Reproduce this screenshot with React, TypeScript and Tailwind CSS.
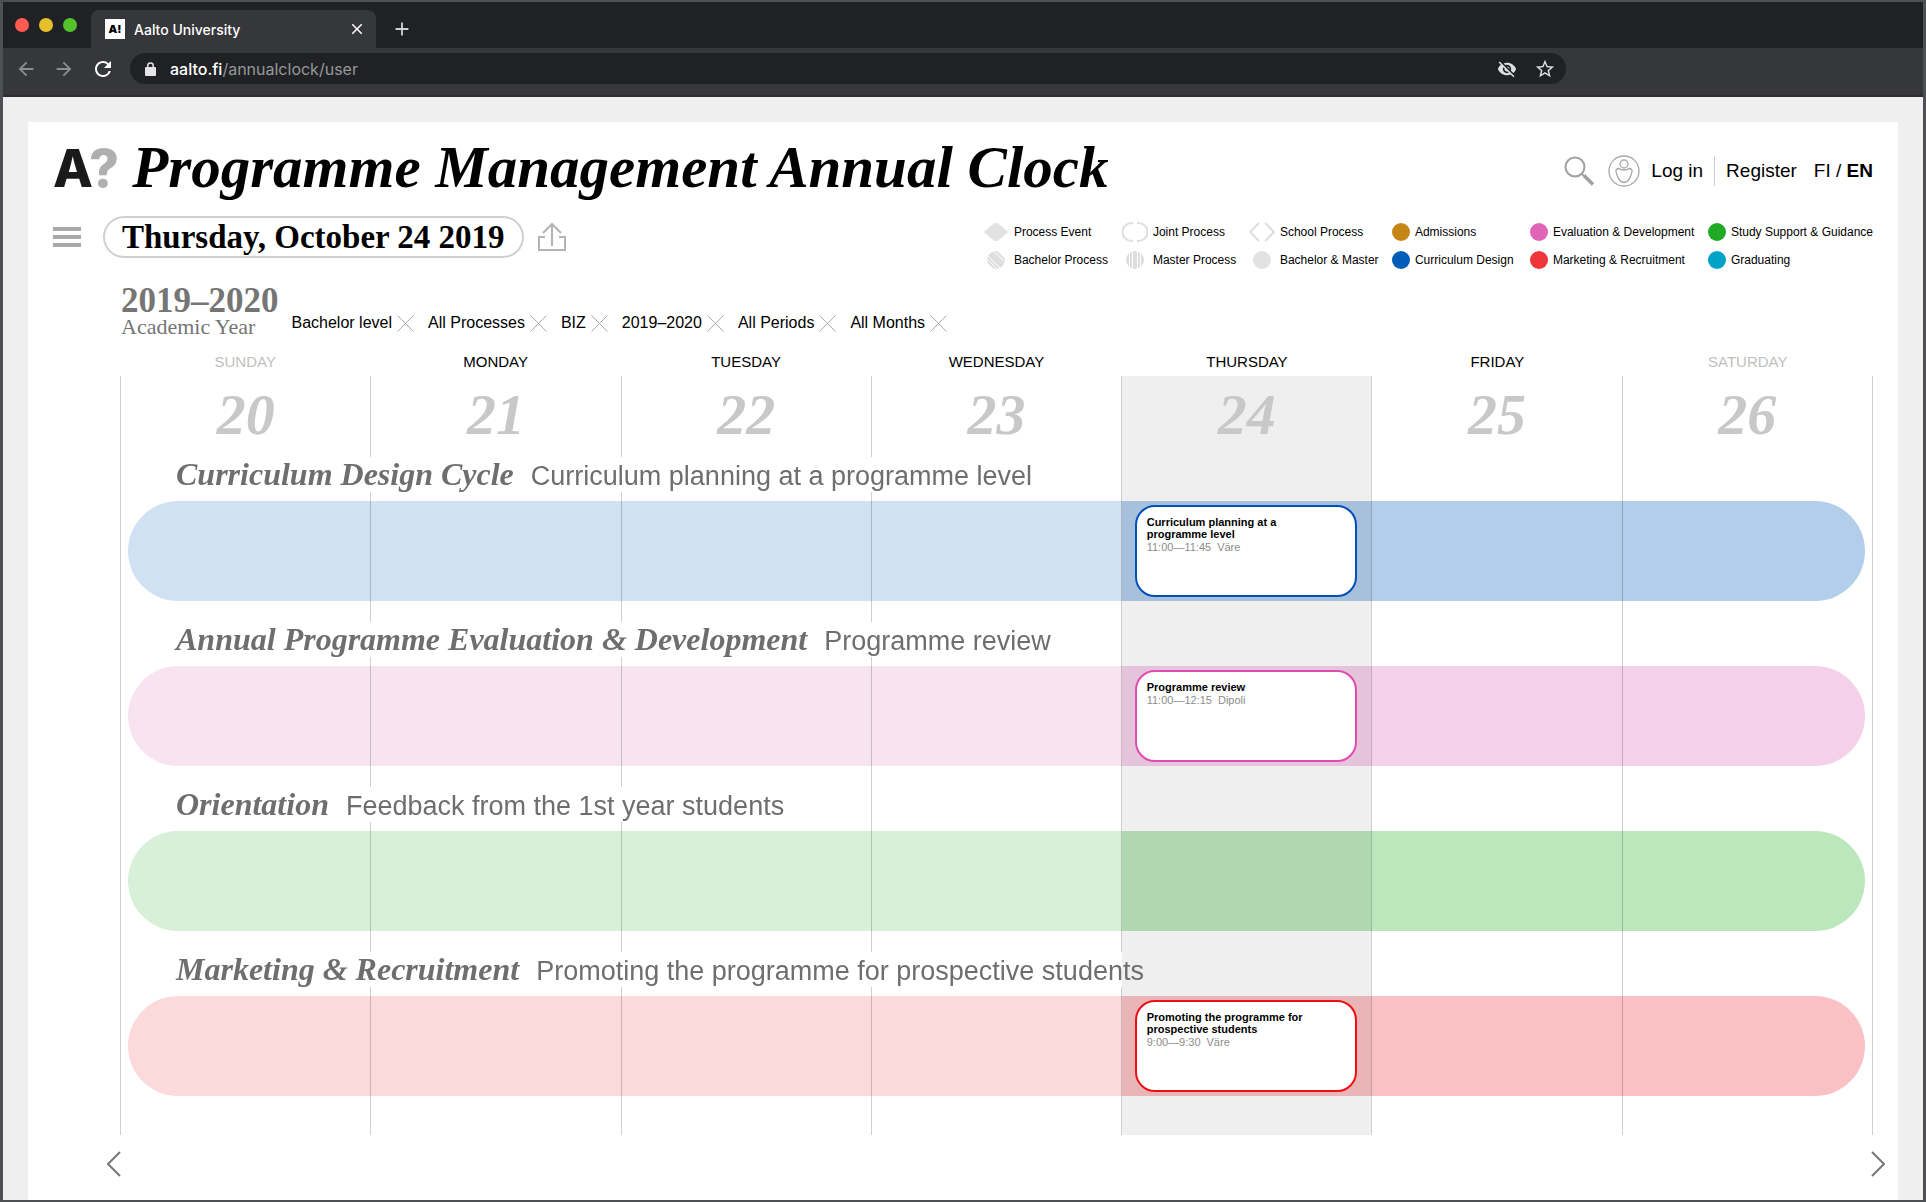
import type { ReactNode } from "react";
import clsx from "clsx";
import { MdArrowBack, MdArrowForward, MdRefresh, MdVisibilityOff, MdStarBorder, MdClose, MdAdd } from "react-icons/md";

const serif = "font-['Liberation_Serif',serif]";

const filters = ["Bachelor level", "All Processes", "BIZ", "2019–2020", "All Periods", "All Months"];

const days = [
  { name: "SUNDAY", date: 20, weekend: true },
  { name: "MONDAY", date: 21 },
  { name: "TUESDAY", date: 22 },
  { name: "WEDNESDAY", date: 23 },
  { name: "THURSDAY", date: 24, today: true },
  { name: "FRIDAY", date: 25 },
  { name: "SATURDAY", date: 26, weekend: true },
];

type Process = {
  title: string;
  subtitle: string;
  past: string;
  upcoming: string;
  border?: string;
  event?: { title: string; time: string; place: string };
};

const processes: Process[] = [
  {
    title: "Curriculum Design Cycle",
    subtitle: "Curriculum planning at a programme level",
    past: "bg-[#d0e2f2]",
    upcoming: "bg-[#b2ceeb]",
    border: "border-[#0050b8]",
    event: { title: "Curriculum planning at a programme level", time: "11:00—11:45", place: "Väre" },
  },
  {
    title: "Annual Programme Evaluation & Development",
    subtitle: "Programme review",
    past: "bg-[#f8e4f1]",
    upcoming: "bg-[#f5d0e9]",
    border: "border-[#e04bb0]",
    event: { title: "Programme review", time: "11:00—12:15", place: "Dipoli" },
  },
  {
    title: "Orientation",
    subtitle: "Feedback from the 1st year students",
    past: "bg-[#d8f0d8]",
    upcoming: "bg-[#bce7bc]",
  },
  {
    title: "Marketing & Recruitment",
    subtitle: "Promoting the programme for prospective students",
    past: "bg-[#fcd9db]",
    upcoming: "bg-[#fac1c4]",
    border: "border-[#ee0f14]",
    event: { title: "Promoting the programme for prospective students", time: "9:00—9:30", place: "Väre" },
  },
];

function Dot({ className }: { className: string }) {
  return <span className={clsx("size-[18px] rounded-full", className)} />;
}

function BrowserBar() {
  return (
    <div className="bg-[#202124] text-white font-['Inter',sans-serif]">
      <div className="flex h-[46px] items-end">
        <div className="flex h-full w-[88px] items-center gap-[10px] pl-3">
          <span className="size-[14px] rounded-full bg-[#ff5b52]" />
          <span className="size-[14px] rounded-full bg-[#e6c029]" />
          <span className="size-[14px] rounded-full bg-[#53c22b]" />
        </div>
        <div className="flex h-[38px] w-[285px] items-center rounded-t-lg bg-[#36373a] pl-[14px] pr-[10px]">
          <span className="flex size-5 items-center justify-center bg-white text-[11px] font-black text-black">A!</span>
          <span className="ml-[9px] flex-1 text-[14px] font-medium">Aalto University</span>
          <button type="button" aria-label="Close tab">
            <MdClose size={18} />
          </button>
        </div>
        <button type="button" aria-label="New tab" className="mb-[8px] ml-[15px] text-[#d0d2d5]">
          <MdAdd size={22} />
        </button>
      </div>
      <div className="flex h-[49px] items-start border-b-2 border-[#2e2c30] bg-[#36373a] pt-[5px]">
        <div className="flex h-[31px] w-[127px] items-center gap-[16px] pl-3">
          <button type="button" aria-label="Back" className="text-[#8d8e91]">
            <MdArrowBack size={22} />
          </button>
          <button type="button" aria-label="Forward" className="text-[#8d8e91]">
            <MdArrowForward size={22} />
          </button>
          <button type="button" aria-label="Reload">
            <MdRefresh size={24} />
          </button>
        </div>
        <div className="mr-[357px] flex h-[31px] flex-1 items-center rounded-full bg-[#202124] pl-[15px] pr-[10px]">
          <svg width="11" height="14" viewBox="0 0 11 14" className="mr-[14px]">
            <rect y="5" width="11" height="9" rx="1" fill="#e4e4e6" />
            <path d="M2.800 6V3.600A2.700 2.700 0 0 1 8.200 3.600V6" fill="none" stroke="#e4e4e6" strokeWidth="1.500" />
          </svg>
          <p className="flex-1 text-[16px] leading-[20px] text-[#97989b]">
            <span className="font-medium text-white">aalto.fi</span>/annualclock/user
          </p>
          <button type="button" aria-label="Tracking blocked" className="mr-[17px] text-[#dedfe1]">
            <MdVisibilityOff size={20} />
          </button>
          <button type="button" aria-label="Bookmark" className="text-[#dedfe1]">
            <MdStarBorder size={22} />
          </button>
        </div>
      </div>
    </div>
  );
}

function LegendItem({ icon, children }: { icon: ReactNode; children: ReactNode }) {
  return (
    <li className="flex h-[18px] items-center gap-[5px] whitespace-nowrap">
      {icon}
      {children}
    </li>
  );
}

function Glyph({ children }: { children: ReactNode }) {
  return (
    <svg width="26" height="20" viewBox="0 0 26 20" fill="none" className="shrink-0">
      {children}
    </svg>
  );
}

function Legend() {
  return (
    <ul className="mt-[7px] grid grid-cols-[139px_127px_143px_138px_178px_auto] gap-y-[10px] text-[12px] leading-[18px]">
      <LegendItem icon={<Glyph><path d="M10.5 1.8Q13 0 15.500 1.800L25.500 10L15.500 18.200Q13 20 10.500 18.200L.5 10Z" fill="#e2e2e2" /></Glyph>}>
        Process Event
      </LegendItem>
      <LegendItem icon={<Glyph><path d="M11 1H9.500A9 9 0 0 0 9.500 19H11M15 1H16.500A9 9 0 0 1 16.500 19H15" stroke="#dedede" strokeWidth="2" /></Glyph>}>
        Joint Process
      </LegendItem>
      <LegendItem icon={<Glyph><path d="M10 1L1 10L10 19M16 1L25 10L16 19" stroke="#dedede" strokeWidth="2" /></Glyph>}>
        School Process
      </LegendItem>
      <LegendItem icon={<Dot className="bg-[#c58616]" />}>Admissions</LegendItem>
      <LegendItem icon={<Dot className="bg-[#e065b8]" />}>Evaluation &amp; Development</LegendItem>
      <LegendItem icon={<Dot className="bg-[#1fab24]" />}>Study Support &amp; Guidance</LegendItem>
      <LegendItem
        icon={
          <Glyph>
            <clipPath id="bachelor"><circle cx="13" cy="10" r="9" /></clipPath>
            <g clipPath="url(#bachelor)" stroke="#dedede">
              <path d="M-4 3L16 23" strokeWidth="2" />
              <path d="M0 3L20 23" strokeWidth="2" />
              <path d="M2 -1L24 21" strokeWidth="5" />
              <path d="M7 -1L27 19" strokeWidth="2" />
              <path d="M11 -1L29 17" strokeWidth="2" />
            </g>
          </Glyph>
        }
      >
        Bachelor Process
      </LegendItem>
      <LegendItem
        icon={
          <Glyph>
            <clipPath id="master"><circle cx="13" cy="10" r="9" /></clipPath>
            <g clipPath="url(#master)" stroke="#dedede">
              <path d="M5.500 0V20M20.500 0V20" strokeWidth="3" />
              <path d="M9 0V20M17 0V20" strokeWidth="2" />
              <path d="M13 0V20" strokeWidth="4" />
            </g>
          </Glyph>
        }
      >
        Master Process
      </LegendItem>
      <LegendItem icon={<Glyph><circle cx="13" cy="10" r="9" fill="#e2e2e2" /></Glyph>}>Bachelor &amp; Master</LegendItem>
      <LegendItem icon={<Dot className="bg-[#005cb9]" />}>Curriculum Design</LegendItem>
      <LegendItem icon={<Dot className="bg-[#f0353b]" />}>Marketing &amp; Recruitment</LegendItem>
      <LegendItem icon={<Dot className="bg-[#00a2c8]" />}>Graduating</LegendItem>
    </ul>
  );
}

function Header() {
  return (
    <header className="flex h-[60px] items-start justify-between">
      <div className="flex items-baseline">
        <a href="#" className="mr-[13px] flex font-['Inter',sans-serif] text-[52px] font-extrabold leading-[50px] text-[#1a1a1a]">
          A<span className="-ml-1 text-[#afafaf]">?</span>
        </a>
        <h1 className={clsx(serif, "whitespace-nowrap text-[59px] font-bold italic leading-[52px]")}>
          Programme Management Annual Clock
        </h1>
      </div>
      <div className="flex h-[60px] items-center text-[19px] leading-[24px]">
        <button type="button" aria-label="Search" className="mr-[13px]">
          <svg width="32" height="32" viewBox="0 0 32 32" fill="none" stroke="#a0a0a0">
            <circle cx="12" cy="12" r="9.500" strokeWidth="2" />
            <path d="M18.500 18.500L21 21" strokeWidth="2" />
            <path d="M21 20.500L30 29.500" strokeWidth="3.500" />
          </svg>
        </button>
        <svg width="32" height="32" viewBox="0 0 32 32" fill="none" stroke="#a8a8a8" strokeWidth="1.300" className="mr-[11px]">
          <circle cx="16" cy="16" r="15" />
          <circle cx="16" cy="9" r="4" />
          <path d="M11 13.500C9 13.500 7.500 14.500 8 16.500C9 22 12 27.500 16 27.500S23 22 24 16.500C24.500 14.500 23 13.500 21 13.500C19 15.500 13 15.500 11 13.500Z" />
        </svg>
        <a href="#">Log in</a>
        <span className="mx-[11px] h-[30px] w-px bg-[#cccccc]" />
        <a href="#">Register</a>
        <p className="ml-[17px]">
          <a href="#">FI</a> / <a href="#" className="font-bold">EN</a>
        </p>
      </div>
    </header>
  );
}

function Toolbar() {
  return (
    <div className="mt-[15px] flex items-start justify-between">
      <div className="flex items-center">
        <button type="button" aria-label="Menu" className="mr-[22px] flex w-7 flex-col gap-1">
          <span className="h-1 bg-[#a8a8a8]" />
          <span className="h-1 bg-[#a8a8a8]" />
          <span className="h-1 bg-[#a8a8a8]" />
        </button>
        <button
          type="button"
          className={clsx(serif, "h-[42px] whitespace-nowrap rounded-full border-2 border-[#cfcfcf] px-[17px] text-[33px] font-bold leading-[38px]")}
        >
          Thursday, October 24 2019
        </button>
        <button type="button" aria-label="Share" className="ml-[13px]">
          <svg width="30" height="30" viewBox="0 0 30 30" fill="none" stroke="#b4b4b4" strokeWidth="2">
            <path d="M8 15H2V28H28V15H22" />
            <path d="M15 24V2M6 11L15 2L24 11" />
          </svg>
        </button>
      </div>
      <Legend />
    </div>
  );
}

function FilterBar() {
  return (
    <div className="mt-[17px] flex items-end pl-[68px]">
      <div className={clsx(serif, "text-[#757575]")}>
        <p className="text-[35px] font-bold leading-[30px]">2019–2020</p>
        <p className="text-[22px] leading-[22px]">Academic Year</p>
      </div>
      <ul className="ml-[13px] flex gap-[14px] pb-[5px] text-[16px] leading-[20px]">
        {filters.map((filter) => (
          <li key={filter} className="flex items-center gap-[5px]">
            {filter}
            <button type="button" aria-label={`Remove ${filter}`}>
              <svg width="17" height="17" viewBox="0 0 17 17" stroke="#ababab">
                <path d="M.5 .5L16.500 16.500M16.500 .5L.5 16.500" />
              </svg>
            </button>
          </li>
        ))}
      </ul>
    </div>
  );
}

function ProcessRow({ process }: { process: Process }) {
  const { title, subtitle, past, upcoming, border, event } = process;
  return (
    <section className="mb-[21px]">
      {/* white label hides the day lines, but stops where today's column begins */}
      <div className="ml-[52px] h-[35px] w-fit max-w-[calc(400%/7-52px)] whitespace-nowrap bg-white pl-1 pr-2 text-[#6e6e6e]">
        <h2 className={clsx(serif, "inline text-[32px] font-bold italic leading-[35px]")}>{title}</h2>
        <span className="ml-[17px] text-[27px] leading-[35px]">{subtitle}</span>
      </div>
      <div className="mt-[9px] grid h-[100px] grid-cols-7">
        <div className={clsx("col-span-4 col-start-1 row-start-1 ml-2 rounded-l-full mix-blend-multiply", past)} />
        <div className={clsx("col-span-3 col-start-5 row-start-1 mr-2 rounded-r-full mix-blend-multiply", upcoming)} />
        {event && (
          <article
            className={clsx("z-10 col-start-5 row-start-1 my-1 ml-[13px] mr-[15px] rounded-[20px] border-2 bg-white px-[10px] py-[9px]", border)}
          >
            <h3 className="max-w-[180px] text-[11px] font-bold leading-[12px]">{event.title}</h3>
            <p className="flex gap-[6px] text-[11px] leading-[14px] text-[#8c8c8c]">
              <time>{event.time}</time>
              <span>{event.place}</span>
            </p>
          </article>
        )}
      </div>
    </section>
  );
}

function Calendar() {
  return (
    <main className="ml-[67px] mt-[15px]">
      <div className="grid h-[23px] grid-cols-7 text-center text-[15px] leading-[18px]">
        {days.map((day) => (
          <p key={day.name} className={clsx(day.weekend && "text-[#bfbfbf]")}>
            {day.name}
          </p>
        ))}
      </div>
      <div className="isolate grid">
        <div className="col-start-1 row-start-1 grid grid-cols-7 border-r border-[#cfcfcf]">
          {days.map((day) => (
            <div
              key={day.date}
              className={clsx(
                serif,
                "border-l border-[#cfcfcf] pt-[11px] text-center text-[58px] font-bold italic leading-[56px] text-[#c8c8c8]",
                day.today && "bg-[#efefef]"
              )}
            >
              {day.date}
            </div>
          ))}
        </div>
        <div className="col-start-1 row-start-1 pb-[18px] pt-[81px]">
          {processes.map((process) => (
            <ProcessRow key={process.title} process={process} />
          ))}
        </div>
      </div>
    </main>
  );
}

function Pager() {
  return (
    <nav className="-mr-3 ml-[54px] mt-4 flex justify-between pb-[20px]">
      <button type="button" aria-label="Previous week">
        <svg width="14" height="26" viewBox="0 0 14 26" fill="none" stroke="#777777" strokeWidth="2">
          <path d="M13 1L1 13L13 25" />
        </svg>
      </button>
      <button type="button" aria-label="Next week">
        <svg width="14" height="26" viewBox="0 0 14 26" fill="none" stroke="#777777" strokeWidth="2">
          <path d="M1 1L13 13L1 25" />
        </svg>
      </button>
    </nav>
  );
}

export default function App() {
  return (
    <div className="flex min-h-screen flex-col border-x-[3px] border-y-2 border-[#4f5053] bg-[#efefef] font-['Liberation_Sans',sans-serif] text-black">
      <BrowserBar />
      <div className="flex flex-1 flex-col px-[25px] pt-[25px]">
        <div className="flex-1 bg-white px-[25px] pt-[19px]">
          <Header />
          <Toolbar />
          <FilterBar />
          <Calendar />
          <Pager />
        </div>
      </div>
    </div>
  );
}
